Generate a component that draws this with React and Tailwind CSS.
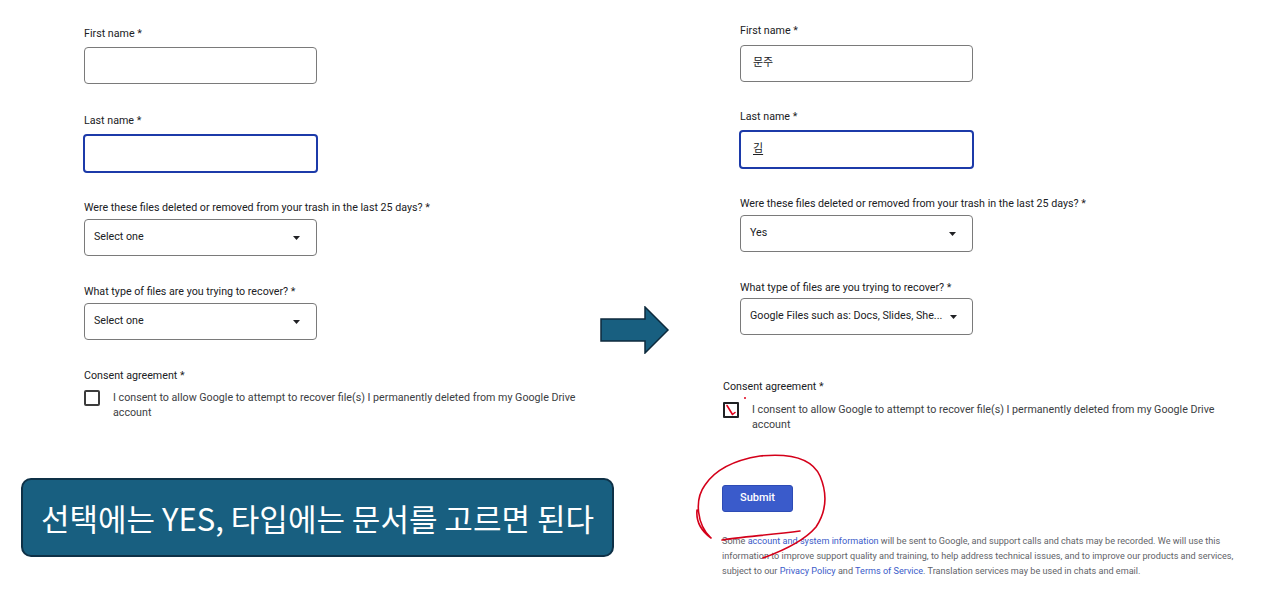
import React from "react";

const font = { fontFamily: "Roboto, 'Noto Sans CJK KR', sans-serif" };

function Label({ children, className = "" }) {
  return (
    <div className={"text-[10.7px] leading-[14px] text-[#202124] " + className}>{children}</div>
  );
}

function TextBox({ value, focused, underline, className = "" }) {
  if (focused) {
    return (
      <div className={"w-[235px] h-[39px] -ml-px rounded-[4px] border-2 border-[#1c3aa9] flex items-center pl-[12px] text-[11px] text-[#202124] " + className}>
        <span className={underline ? "underline underline-offset-2" : ""}>{value}</span>
      </div>
    );
  }
  return (
    <div className={"w-[233px] h-[37px] rounded-[4px] border border-[#7a7a7a] flex items-center pl-[12px] text-[11px] text-[#202124] " + className}>
      {value}
    </div>
  );
}

function Select({ value, className = "" }) {
  return (
    <div className={"w-[233px] h-[37px] rounded-[4px] border border-[#7a7a7a] flex items-center justify-between gap-2 pl-[9px] pr-[16px] text-[10.7px] text-[#202124] " + className}>
      <span className="whitespace-nowrap">{value}</span>
      <svg width="7" height="4" viewBox="0 0 7 4" className="shrink-0"><path d="M0 0h7L3.5 4z" fill="#202124" /></svg>
    </div>
  );
}

export default function App() {
  return (
    <div className="relative w-[1280px] h-[605px] bg-white overflow-hidden flex" style={font}>
      {/* Left column */}
      <div className="w-[600px] flex flex-col">
        <div className="pl-[84px] pt-[27px] flex flex-col">
          <Label>First name *</Label>
          <TextBox className="mt-[6px]" />
          <Label className="mt-[30px]">Last name *</Label>
          <TextBox focused className="mt-[6px]" />
          <Label className="mt-[28px]">Were these files deleted or removed from your trash in the last 25 days? *</Label>
          <Select value="Select one" className="mt-[4px]" />
          <Label className="mt-[29px]">What type of files are you trying to recover? *</Label>
          <Select value="Select one" className="mt-[4px]" />
          <Label className="mt-[29px]">Consent agreement *</Label>
          <div className="mt-[7px] flex items-start">
            <div className="w-[16px] h-[16px] border-2 border-[#3c3c3c] rounded-[2px] shrink-0" />
            <div className="ml-[13px] text-[10.7px] leading-[15px] text-[#3c4043] w-[480px]">
              I consent to allow Google to attempt to recover file(s) I permanently deleted from my Google Drive account
            </div>
          </div>
        </div>
        <div className="ml-[21px] mt-[58px] w-[593px] h-[79px] rounded-[10px] border-2 border-[#0e3147] bg-[#185f80] flex items-center justify-center">
          <span
            className="text-white text-[31px] leading-none"
            style={{ fontFamily: "'Noto Sans CJK KR', sans-serif" }}
          >
            선택에는 YES, 타입에는 문서를 고르면 된다
          </span>
        </div>
      </div>

      {/* Arrow column */}
      <div className="w-[122px] pt-[306px]">
        <svg width="70" height="48" viewBox="0 0 70 48">
          <path d="M1 13H45V1L68 24L45 47V35H1Z" fill="#185f80" stroke="#0e2a3c" strokeWidth="1.5" strokeLinejoin="miter" />
        </svg>
      </div>

      {/* Right column */}
      <div className="flex flex-col pt-[24px]">
        <div className="pl-[18px] flex flex-col">
          <Label>First name *</Label>
          <TextBox value="문주" className="mt-[7px]" />
          <Label className="mt-[28px]">Last name *</Label>
          <TextBox value="김" focused underline className="mt-[6px]" />
          <Label className="mt-[28px]">Were these files deleted or removed from your trash in the last 25 days? *</Label>
          <Select value="Yes" className="mt-[4px]" />
          <Label className="mt-[29px]">What type of files are you trying to recover? *</Label>
          <Select value="Google Files such as: Docs, Slides, She..." className="mt-[3px]" />
        </div>
        <Label className="mt-[45px] ml-px">Consent agreement *</Label>
        <div className="mt-[8px] flex items-start ml-px relative">
          <div className="w-[16px] h-[16px] border-2 border-[#202124] rounded-[1px] shrink-0 relative">
            <svg className="absolute left-0 top-0" width="12" height="12" viewBox="0 0 12 12">
              <path d="M2 1.5L7.5 10.5L10 8.5" fill="none" stroke="#e0001b" strokeWidth="1.6" strokeLinecap="round" strokeLinejoin="round" />
            </svg>
          </div>
          <div className="absolute left-[21px] -top-[5px] w-[2px] h-[2px] rounded-full bg-[#e0001b]" />
          <div className="ml-[13px] text-[10.7px] leading-[15px] text-[#3c4043] w-[480px]">
            I consent to allow Google to attempt to recover file(s) I permanently deleted from my Google Drive account
          </div>
        </div>
        <div className="mt-[53px] w-[71px] h-[27px] rounded-[3px] bg-[#3a5bcb] border border-[#2d4bb5] flex items-center justify-center text-white text-[11px] font-medium">
          Submit
        </div>
        <div className="mt-[22px] w-[525px] text-[9.1px] leading-[15px] text-[#5f6368]">
          Some <span className="text-[#3b5bc9]">account and system information</span> will be sent to Google, and support calls and chats may be recorded. We will use this information to improve support quality and training, to help address technical issues, and to improve our products and services, subject to our <span className="text-[#3b5bc9]">Privacy Policy</span> and <span className="text-[#3b5bc9]">Terms of Service</span>. Translation services may be used in chats and email.
        </div>
      </div>

      {/* Hand-drawn red annotation circle */}
      <svg className="absolute left-0 top-0 pointer-events-none" width="1280" height="605" viewBox="0 0 1280 605">
        <path
          d="M722 540 C740 537 770 535 800 531 M711 538 C697 525 694 500 705 485 C715 470 735 460 760 456 C790 453 812 458 820 476 C828 495 826 512 816 527 C805 540 785 550 763 558 M711 538 C700 530 696 520 697 510"
          fill="none"
          stroke="#d4001a"
          strokeWidth="1.6"
          strokeLinecap="round"
        />
      </svg>
    </div>
  );
}
